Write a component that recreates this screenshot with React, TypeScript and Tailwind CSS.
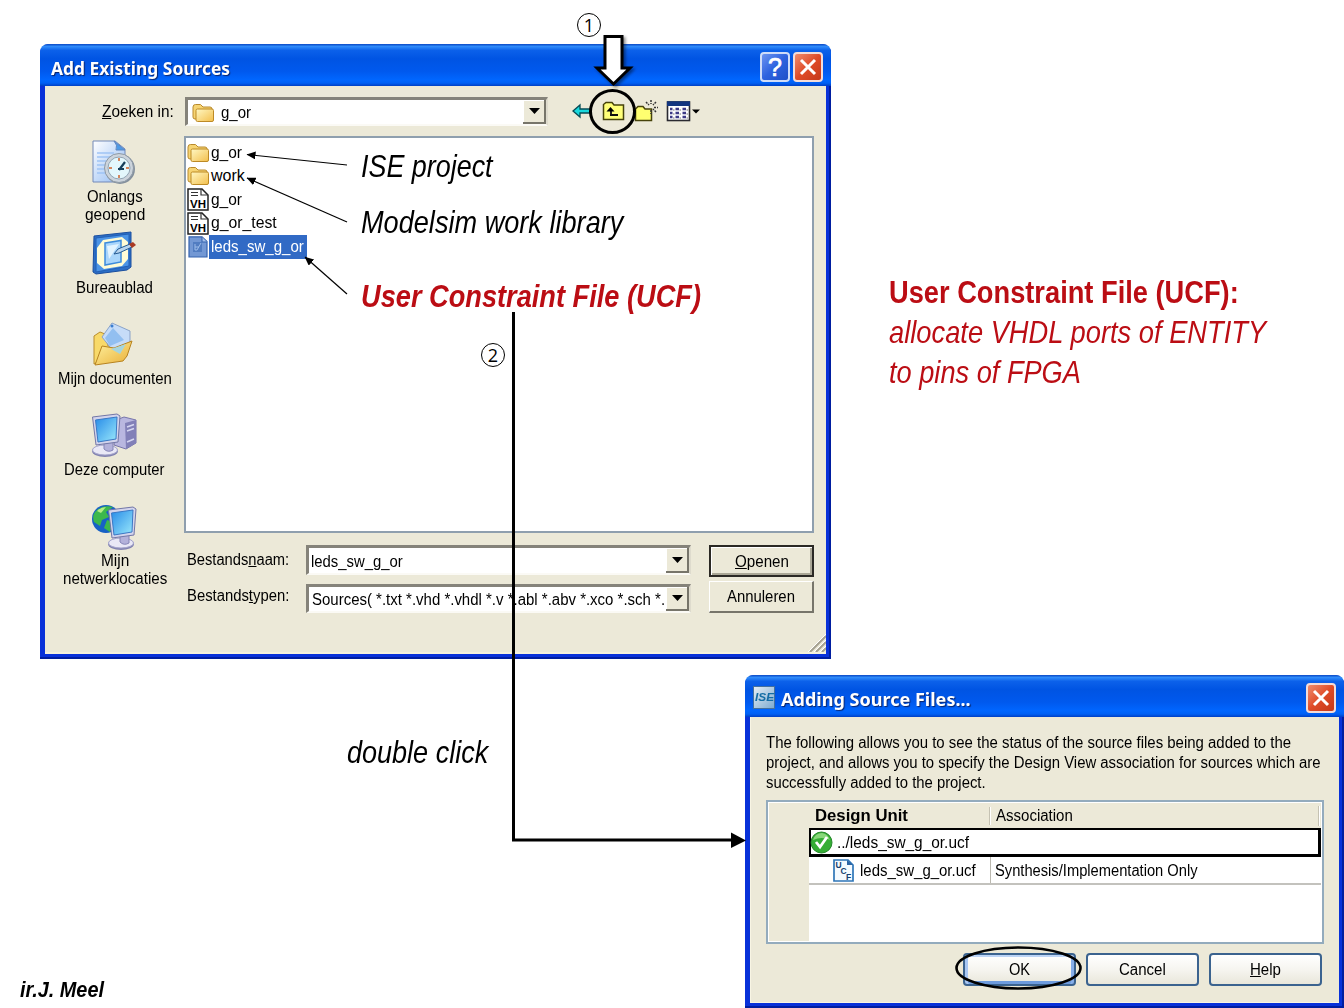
import React, { useLayoutEffect, useRef, useState } from "react";

/** Single-line text condensed or widened to an exact width. */
function T({ w, className = "", children }: { w: number; className?: string; children: React.ReactNode }) {
  const ref = useRef<HTMLSpanElement>(null);
  const [k, setK] = useState(1);
  useLayoutEffect(() => {
    if (ref.current) setK(w / ref.current.offsetWidth);
  }, [w]);
  return (
    <span className={"block shrink-0 whitespace-nowrap " + className} style={{ width: w }}>
      <span ref={ref} className="inline-block origin-left whitespace-pre" style={{ transform: `scaleX(${k})` }}>
        {children}
      </span>
    </span>
  );
}

const Folder = () => (
  <svg width="24" height="20" viewBox="0 0 24 20" className="shrink-0">
    <defs>
      <linearGradient id="fold" x1="0" y1="0" x2="1" y2="1">
        <stop offset="0" stopColor="#fff8c4" />
        <stop offset="1" stopColor="#f3bf4c" />
      </linearGradient>
    </defs>
    <path d="M1 4Q1 1.500 3.500 1.500H8.500L11 4H18Q20 4 20 6V16H3Q1 16 1 14Z" fill="#f6d473" stroke="#b98a2c" />
    <path d="M4 7.500Q4 6 5.500 6H20Q21.500 6 21.500 7.500V17Q21.500 18.500 20 18.500H5.500Q4 18.500 4 17Z" fill="url(#fold)" stroke="#bd8a25" />
  </svg>
);

const VhFile = () => (
  <svg width="22" height="23" viewBox="0 0 22 23" className="shrink-0">
    <path d="M1 1H15L21 7V22H1Z" fill="#fff" stroke="#222" strokeWidth="1.500" />
    <path d="M14 1V7H21M4 4.500H11M4 7.500H11" fill="none" stroke="#333" strokeWidth="1.200" />
    <text x="3" y="19.500" fontSize="11.500" fontWeight="bold" fontFamily="Liberation Sans, sans-serif" textLength="16">VH</text>
  </svg>
);

const SelFile = () => (
  <svg width="22" height="22" viewBox="0 0 22 22" className="shrink-0">
    <path d="M2 0.800H15L20 5.500V21H2Z" fill="#7398d4" stroke="#3563ae" strokeWidth="1.200" />
    <path d="M15 1V6H20" fill="#a6c1eb" stroke="#3563ae" />
    <path d="M6 6H15V16H6Z" fill="#527dc1" />
    <path d="M8 8V14H10L14 7M8 11H12" stroke="#9cbce9" fill="none" />
  </svg>
);

const Recent = () => (
  <svg width="45" height="44" viewBox="0 0 45 44">
    <defs>
      <linearGradient id="doc" x1="0" y1="0" x2="1" y2="1"><stop stopColor="#fff" /><stop offset="1" stopColor="#8fb9f3" /></linearGradient>
    </defs>
    <path d="M1 1H23L33 9V42H1Z" fill="url(#doc)" stroke="#7389b8" />
    <path d="M22 1Q26 5 24 10H33Z" fill="#4d9ae6" stroke="#5d86c2" />
    <path d="M5 13H22M5 17H18M5 21H15M5 25H14M5 29H14M5 33H15" stroke="#9fc4f5" strokeWidth="1.500" />
    <circle cx="28" cy="29" r="15" fill="#84909d" />
    <circle cx="27" cy="28" r="14.500" fill="#ccd4dc" stroke="#8d99a5" />
    <circle cx="27" cy="28" r="11" fill="#e3f7fc" stroke="#91a4b3" />
    <path d="M27 18V21M27 35V38M17 28H20M34 28H37" stroke="#d5875e" strokeWidth="2" />
    <path d="M27 30L33 22M26 29H32" stroke="#17405b" strokeWidth="2.200" fill="none" />
  </svg>
);

const Desktop = () => (
  <svg width="45" height="44" viewBox="0 0 45 44">
    <path d="M2 5L39 1V36L35 39L4 43L1 41Z" fill="#2b6ec6" stroke="#1b4f9f" />
    <path d="M4 7L37 3V35L4 41Z" fill="#4b94e6" stroke="#235fb4" />
    <path d="M11 9L30 6L36 11V28L30 35L12 38L5 32V17Z" fill="#fffcd6" />
    <path d="M13 12L29 9.500V31L13 34Z" fill="#a9d6fb" stroke="#3c8bdb" strokeWidth="1.500" />
    <path d="M15 15L27 13L17 28Z" fill="#e2f4ff" />
    <path d="M22 23L26 18L38 13L40 16L27 22Z" fill="#b9d6ef" stroke="#245a91" />
    <path d="M37 13L41 11L44 14L40 17Z" fill="#a93a24" />
  </svg>
);

const Documents = () => (
  <svg width="45" height="45" viewBox="0 0 45 45">
    <defs>
      <linearGradient id="dfold" x1="0" y1="0" x2="1" y2="1"><stop stopColor="#fff3a2" /><stop offset="1" stopColor="#e9ae35" /></linearGradient>
    </defs>
    <path d="M2 42V14L8 10L13 12L16 24L36 17L39 20Z" fill="#f8d969" stroke="#b98d2e" />
    <path d="M20 1L38 9V22L22 30L10 15Z" fill="#c6dcf8" stroke="#8aa3c8" />
    <path d="M21 6L32 18L18 24L13 16Z" fill="#92bff0" />
    <circle cx="20" cy="4" r="1.500" fill="#3b7ed0" />
    <path d="M3 43L10 24L22 26L40 19L35 34L31 39Z" fill="url(#dfold)" stroke="#b78320" />
    <path d="M19 27L34 22L28 32Z" fill="#a6d5dd" />
  </svg>
);

const Screen = () => (
  <>
    <ellipse cx="13" cy="38" rx="13" ry="6" fill="#8283b0" />
    <ellipse cx="13" cy="37" rx="12.500" ry="5" fill="#e9e8f6" stroke="#a5a5cc" />
    <path d="M12 27L21 26V37Q16 40 12 36Z" fill="#b3b1da" stroke="#8585b7" />
    <path d="M0.500 4L25 1L28 3L26 29L4 32Z" fill="#d3d4ec" stroke="#7377a7" />
    <path d="M3.500 7L25 4L24 26L6 29Z" fill="url(#scr)" stroke="#3a78c5" />
  </>
);

const ScreenDefs = () => (
  <defs>
    <linearGradient id="scr" x1="0" y1="0" x2="1" y2="1"><stop stopColor="#268be8" /><stop offset="1" stopColor="#9be9fb" /></linearGradient>
  </defs>
);

const Computer = () => (
  <svg width="45" height="45" viewBox="0 0 45 45">
    <ScreenDefs />
    <path d="M24 7L32 4L44 7V30L34 36L22 32Z" fill="#b9b7e0" stroke="#7775aa" />
    <path d="M33 10L44 7V30L34 36Z" fill="#8280b8" />
    <path d="M35 14L42 11.500M35 18L42 15.500M35 29L42 26" stroke="#d6d6f2" strokeWidth="1.500" />
    <Screen />
  </svg>
);

const Network = () => (
  <svg width="45" height="46" viewBox="0 0 45 46">
    <ScreenDefs />
    <circle cx="14" cy="15" r="14" fill="#1761c5" />
    <path d="M3 8Q10 0 21 3L14 8L17 13L10 16L8 22L2 18Q0 12 3 8ZM15 16L21 18L18 28L12 24Z" fill="#3cb84c" />
    <path d="M5 7Q9 3 14 3L9 9Z" fill="#b4ec85" />
    <g transform="translate(16 2)"><Screen /></g>
  </svg>
);

const places: { icon: React.ReactNode; lines: [string, number][] }[] = [
  { icon: <Recent />, lines: [["Onlangs", 56], ["geopend", 60]] },
  { icon: <Desktop />, lines: [["Bureaublad", 77]] },
  { icon: <Documents />, lines: [["Mijn documenten", 114]] },
  { icon: <Computer />, lines: [["Deze computer", 101]] },
  { icon: <Network />, lines: [["Mijn", 28], ["netwerklocaties", 104]] },
];

const files: { icon: React.ReactNode; name: string; w: number; selected?: boolean }[] = [
  { icon: <Folder />, name: "g_or", w: 31 },
  { icon: <Folder />, name: "work", w: 34 },
  { icon: <VhFile />, name: "g_or", w: 31 },
  { icon: <VhFile />, name: "g_or_test", w: 66 },
  { icon: <SelFile />, name: "leds_sw_g_or", w: 93, selected: true },
];

const Drop = () => (
  <div className="flex h-full w-[23px] shrink-0 items-center justify-center border-r-2 border-b-2 border-[#77756a] bg-[#ece9d8] pl-px shadow-[inset_1px_1px_0_#fff]">
    <svg width="11" height="6" viewBox="0 0 11 6"><path d="M0 0H11L5.500 6Z" /></svg>
  </div>
);

function Combo({ className, children }: { className: string; children: React.ReactNode }) {
  return (
    <div className={"flex items-center overflow-hidden border-t-[3px] border-l-[3px] border-r-2 border-b-2 border-t-[#85837a] border-l-[#85837a] border-r-[#dedbcd] border-b-[#fbfaf5] bg-white " + className}>
      <div className="flex min-w-0 flex-1 items-center overflow-hidden pt-px">{children}</div>
      <Drop />
    </div>
  );
}

const Close = () => (
  <div className="flex size-[30px] items-center justify-center rounded-[4px] border-2 border-[#f4dcd8] bg-gradient-to-br from-[#ee8a6b] via-[#df4b27] to-[#c5381a]">
    <svg width="18" height="18" viewBox="0 0 18 18"><path d="M2 2L16 16M16 2L2 16" stroke="#fff" strokeWidth="3" /></svg>
  </div>
);

const titleBar = "flex shrink-0 items-center rounded-t-[8px] bg-[linear-gradient(180deg,#0a48c4_0%,#2f8bfa_6%,#0c61ea_15%,#0054e3_35%,#0059ee_65%,#0066ff_85%,#0060f4_93%,#003fc4_100%)]";
const titleFont = "font-['Noto_Sans','Open_Sans',sans-serif] font-bold text-[17px] leading-[24px] text-white [text-shadow:1px_1px_1px_#0a246a]";
const red = "text-[#bb0d14]";

function SourcesDialog() {
  return (
    <div className="absolute left-[40px] top-[44px] flex h-[615px] w-[791px] flex-col rounded-t-[9px] bg-[#0831d9] shadow-[inset_-2px_-2px_0_#001ea0]">
      <div className={titleBar + " h-[42px] pr-[8px] pl-[11px]"}>
        <T w={179} className={titleFont + " mt-[7px]"}>Add Existing Sources</T>
        <div className="mt-[4px] ml-auto flex gap-[3px]">
          <div className="flex size-[30px] items-center justify-center rounded-[4px] border-2 border-[#cfdcf8] bg-gradient-to-br from-[#6c93f0] via-[#2d62df] to-[#1f4fc8] font-['Liberation_Sans',sans-serif] text-[25px] leading-none text-white [-webkit-text-stroke:0.7px_white]">?</div>
          <Close />
        </div>
      </div>
      <div className="mr-[5px] mb-[5px] ml-[5px] flex flex-1 flex-col border-b-2 border-[#f5f1dc] bg-[#ece9d8]">
        <div className="flex h-[50px] shrink-0 items-start pt-[11px]">
          <T w={72} className="mt-[5px] ml-[57px] leading-[20px]"><u>Z</u>oeken in:</T>
          <Combo className="ml-[11px] h-[29px] w-[363px]">
            <div className="ml-[4px] flex items-center gap-[5px]"><Folder /><T w={30} className="leading-[22px]">g_or</T></div>
          </Combo>
          <svg width="130" height="28" viewBox="0 0 130 28" className="ml-[24px]">
            <path d="M1 14L8 8V12H19V16H8V20Z" fill="#19d8dc" stroke="#064b55" strokeWidth="1.300" />
            <path d="M31.500 22.500V7.500L34 5.500H40L42 8H51.500V22.500Z" fill="#ffff78" stroke="#46430a" strokeWidth="1.500" />
            <path d="M39 18.500V12M38 18H46" stroke="#111" strokeWidth="1.800" fill="none" />
            <path d="M34.500 14.500L38.500 10L42.500 14.500Z" />
            <path d="M63.500 23.500V12L66 9.500H71L73 12H79.500V23.500Z" fill="#ffff70" stroke="#46430a" strokeWidth="1.500" />
            <path d="M79 3V7M74 5L77 8M84 5L81 8M82 10.500H86M79 13V17M84 15L81 12" stroke="#343434" strokeWidth="1.500" strokeDasharray="2 1" />
            <rect x="95.500" y="5" width="22" height="18.500" fill="#fff" stroke="#2a2a30" strokeWidth="1.600" />
            <path d="M95 4.300H118V9H95Z" fill="#12357f" />
            <path d="M98 12H100.500M103.500 12H107M110.500 12H114M98 16H100.500M103.500 16H107M110.500 16H114M98 20H100.500M103.500 20H107M110.500 20H114" stroke="#3d3a86" strokeWidth="2.500" />
            <path d="M101 13H102.500M107.500 13H109M114.500 13H116M101 17H102.500M107.500 17H109M114.500 17H116M101 21H102.500M107.500 21H109M114.500 21H116" stroke="#777" strokeWidth="1" />
            <path d="M120 12.500H128L124 16.500Z" />
          </svg>
        </div>
        <div className="flex h-[397px] shrink-0">
          <div className="flex w-[139px] shrink-0 flex-col pt-[4px]">
            {places.map((p) => (
              <div key={p.lines[0][0]} className="flex h-[91px] shrink-0 flex-col items-center">
                <div className="flex h-[48px] shrink-0 items-start">{p.icon}</div>
                {p.lines.map(([t, w]) => <T key={t} w={w} className="leading-[18px]">{t}</T>)}
              </div>
            ))}
          </div>
          <div className="flex w-[630px] flex-col border-2 border-[#8f9fae] bg-white pt-[3px] pl-px">
            {files.map((f, i) => (
              <div key={i} className="flex h-[23.5px] shrink-0 items-center">
                <div className="flex w-[22px] shrink-0 items-center">{f.icon}</div>
                <div className={f.selected ? "flex h-[24px] items-center bg-[#316ac5] pr-[3px] pl-[2px] text-white" : "flex h-[24px] items-center px-[2px]"}>
                  <T w={f.w} className="leading-[22px]">{f.name}</T>
                </div>
              </div>
            ))}
          </div>
        </div>
        <div className="mt-[12px] ml-[142px] flex">
          <div className="flex w-[119px] flex-col pt-[5px]">
            <T w={102} className="h-[36px] leading-[20px]">Bestands<u>n</u>aam:</T>
            <T w={102} className="leading-[20px]">Bestands<u>t</u>ypen:</T>
          </div>
          <div className="flex flex-col gap-[9px]">
            <Combo className="h-[30px] w-[385px]"><T w={92} className="ml-[2px] pt-px leading-[22px]">leds_sw_g_or</T></Combo>
            <Combo className="h-[29px] w-[385px]"><T w={353} className="ml-[3px] pt-px leading-[22px]">Sources( *.txt *.vhd *.vhdl *.v *.abl *.abv *.xco *.sch *.</T></Combo>
          </div>
          <div className="ml-[18px] flex flex-col gap-[4px]">
            <div className="flex h-[32px] w-[105px] items-center justify-center border-2 border-[#2b2924] shadow-[inset_1px_1px_0_#fff,inset_-2px_-2px_0_#aaa796]"><T w={54} className="pt-px leading-[20px]"><u>O</u>penen</T></div>
            <div className="flex h-[32px] w-[105px] items-center justify-center border-t border-r-2 border-b-2 border-l border-t-white border-r-[#77756a] border-b-[#77756a] border-l-white"><T w={68} className="pt-px leading-[20px]">Annuleren</T></div>
          </div>
        </div>
        <svg width="18" height="18" viewBox="0 0 18 18" className="mt-auto ml-auto"><path d="M2 18L18 2M8 18L18 8M14 18L18 14" stroke="#a5a191" strokeWidth="2" /><path d="M0 18L18 0M6 18L18 6M12 18L18 12" stroke="#fff" strokeWidth="1" /></svg>
      </div>
    </div>
  );
}

const xpButton = "flex h-[33px] w-[113px] items-center justify-center rounded-[4px] border-2 border-[#3b638f] bg-gradient-to-b from-white via-[#f6f5f0] to-[#e9e7db]";

function StatusDialog() {
  return (
    <div className="absolute left-[745px] top-[675px] flex h-[333px] w-[599px] flex-col rounded-t-[9px] bg-[#0831d9] shadow-[inset_-2px_-2px_0_#001ea0]">
      <div className={titleBar + " h-[42px] pr-[8px] pl-[8px]"}>
        <div className="mt-[3px] flex h-[23px] w-[22px] items-center justify-center border border-[#46709c] bg-gradient-to-br from-[#e4edf4] to-[#7eabd0]">
          <T w={19} className="text-[10px] leading-none font-bold text-[#146da5] italic">ISE</T>
        </div>
        <T w={190} className={titleFont + " mt-[7px] ml-[6px]"}>Adding Source Files...</T>
        <div className="mt-[4px] ml-auto"><Close /></div>
      </div>
      <div className="mr-[5px] mb-[5px] ml-[5px] flex flex-1 flex-col border-b border-l border-[#f8f5e4] bg-[#ece9d8] pt-[15px] pl-[15px]">
        <T w={525} className="pt-px leading-[20px]">The following allows you to see the status of the source files being added to the</T>
        <T w={555} className="leading-[20px]">project, and allows you to specify the Design View association for sources which are</T>
        <T w={220} className="leading-[20px]">successfully added to the project.</T>
        <div className="mt-[7px] flex h-[144px] w-[558px] shrink-0 border-2 border-[#93abbd] bg-white p-px">
          <div className="w-[40px] shrink-0 bg-[#ece9d8]" />
          <div className="flex flex-1 flex-col">
            <div className="flex h-[25px] items-center bg-[#ece9d8]">
              <T w={93} className="ml-[6px] leading-[20px] font-bold">Design Unit</T>
              <div className="ml-[81px] h-[18px] w-[2px] border-l border-[#c5c2b3] bg-white" />
              <T w={77} className="ml-[5px] leading-[20px]">Association</T>
              <div className="mr-px ml-auto h-[20px] w-[2px] border-l border-[#c5c2b3] bg-white" />
            </div>
            <div className="flex h-[29px] items-center border-2 border-r-[3px] border-b-[3px] border-black">
              <svg width="23" height="23" viewBox="0 0 23 23" className="-ml-px"><circle cx="11.500" cy="11.500" r="10.500" fill="#35ad35" stroke="#238628" /><path d="M3 9Q5 2 12 2Q18 3 20 9Q12 5 3 9Z" fill="#88d77a" /><path d="M6 11L10 16L17 6" stroke="#fff" strokeWidth="2.800" fill="none" /></svg>
              <T w={132} className="ml-[4px] pt-[2px] leading-[20px]">../leds_sw_g_or.ucf</T>
            </div>
            <div className="flex h-[28px] items-center border-b-2 border-[#c3c2bd]">
              <svg width="21" height="23" viewBox="0 0 21 23" className="ml-[24px]">
                <path d="M1 1H15L20 6V22H1Z" fill="#f4faff" stroke="#2e76b8" strokeWidth="1.700" />
                <path d="M14 1V6H20Z" fill="#2b65a6" />
                <g fontFamily="Liberation Sans, sans-serif" fontWeight="bold" fontSize="8.500" fill="#153f70"><text x="2.500" y="9">U</text><text x="7.500" y="14.500">C</text><text x="13" y="20.500">F</text></g>
              </svg>
              <T w={116} className="ml-[6px] pt-[2px] leading-[20px]">leds_sw_g_or.ucf</T>
              <div className="ml-[14px] h-full w-px bg-[#bbb9b0]" />
              <T w={203} className="ml-[4px] pt-[2px] leading-[20px]">Synthesis/Implementation Only</T>
            </div>
          </div>
        </div>
        <div className="mt-[9px] flex gap-[10px] pl-[197px]">
          <div className={xpButton + " shadow-[inset_0_2px_0_#bcd4f6,inset_3px_0_0_#a9c7f3,inset_-3px_0_0_#86aee9,inset_0_-3px_0_#6d9bdd]"}><T w={21} className="leading-[20px]">OK</T></div>
          <div className={xpButton}><T w={47} className="leading-[20px]">Cancel</T></div>
          <div className={xpButton}><T w={31} className="leading-[20px]"><u>H</u>elp</T></div>
        </div>
      </div>
    </div>
  );
}

const note = "text-[32px] leading-[40px] italic";
const badge = "absolute flex size-[24px] items-center justify-center rounded-full border-[1.5px] border-black font-['Open_Sans',sans-serif] text-[18px] leading-none";

export default function App() {
  return (
    <div className="relative h-[1008px] w-[1344px] overflow-hidden bg-white font-['Liberation_Sans',Arial,sans-serif] text-[16px] text-black">
      <SourcesDialog />
      <StatusDialog />

      <div className={badge + " left-[577px] top-[13px]"}>1</div>
      <div className={badge + " left-[481px] top-[343px]"}>2</div>

      <div className="absolute left-[361px] top-[146px]"><T w={132} className={note}>ISE project</T></div>
      <div className="absolute left-[361px] top-[202px]"><T w={262} className={note}>Modelsim work library</T></div>
      <div className={"absolute left-[361px] top-[276px] " + red}><T w={340} className={note + " font-bold"}>User Constraint File (UCF)</T></div>
      <div className="absolute left-[347px] top-[732px]"><T w={141} className={note}>double click</T></div>
      <div className={"absolute left-[889px] top-[272px] flex flex-col text-[32px] leading-[40px] " + red}>
        <T w={350} className="font-bold">User Constraint File (UCF):</T>
        <T w={377} className="italic">allocate VHDL ports of ENTITY</T>
        <T w={192} className="italic">to pins of FPGA</T>
      </div>
      <div className="absolute left-[20px] top-[976px]"><T w={84} className="text-[22px] leading-[28px] font-bold italic">ir.J. Meel</T></div>

      <svg width="1344" height="1008" viewBox="0 0 1344 1008" className="pointer-events-none absolute inset-0">
        <defs>
          <marker id="tip" markerUnits="userSpaceOnUse" markerWidth="9" markerHeight="8" refX="8.500" refY="4" orient="auto"><path d="M0 0L9 4L0 8Z" /></marker>
          <filter id="sh" x="-30%" y="-30%" width="170%" height="170%"><feDropShadow dx="2" dy="2" stdDeviation="1.500" floodOpacity="0.450" /></filter>
        </defs>
        <g stroke="#000" strokeWidth="1.200" fill="none">
          <path d="M347 165L247 154.500" markerEnd="url(#tip)" />
          <path d="M347 222L247 178" markerEnd="url(#tip)" />
          <path d="M347 294L305 257" markerEnd="url(#tip)" />
        </g>
        <path d="M513.500 312V840H733" stroke="#000" strokeWidth="3" fill="none" />
        <path d="M731 832.500L746 840.500L731 848Z" />
        <path d="M605 36.500H622V68H630L613.500 84L597 68H605Z" fill="#fff" stroke="#000" strokeWidth="3" filter="url(#sh)" />
        <ellipse cx="612.500" cy="111.500" rx="22" ry="21" fill="none" stroke="#000" strokeWidth="3" />
        <ellipse cx="1018.500" cy="968" rx="62" ry="20.500" fill="none" stroke="#000" strokeWidth="2.600" />
      </svg>
    </div>
  );
}
